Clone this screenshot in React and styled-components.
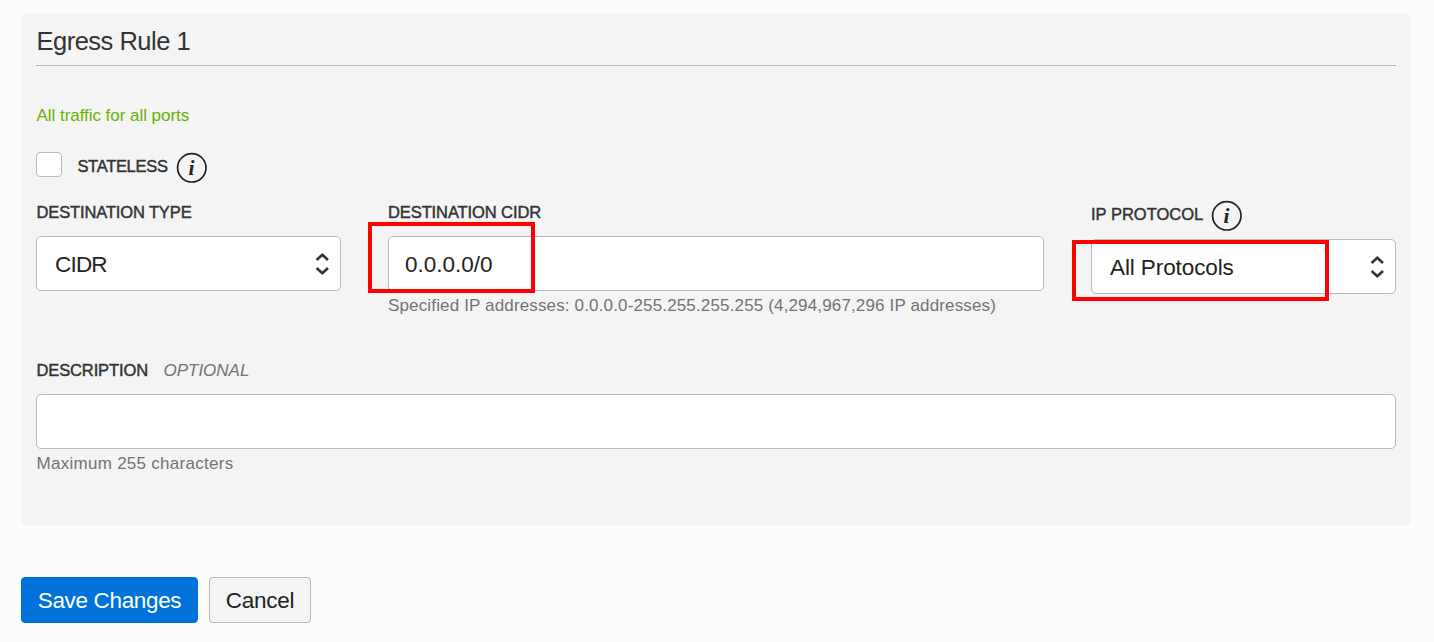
import React from "react";
import styled, { createGlobalStyle } from "styled-components";

const GlobalStyle = createGlobalStyle`
  * { box-sizing: border-box; }
  body {
    margin: 0;
    background: #fcfcfc;
    color: #333;
    font-family: "Liberation Sans", Arial, sans-serif;
  }
`;

const Page = styled.main`
  padding: 13px 23px 0 21px;
  height: 642px;
  overflow: hidden;
`;

const Panel = styled.section`
  height: 513px;
  padding: 0 15px;
  border-radius: 5px;
  background: #f4f4f4;
`;

const Title = styled.h2`
  margin: 0;
  height: 53px;
  padding: 8px 0 0 0.5px;
  border-bottom: 1px solid #b5b8bd;
  font-size: 25.5px;
  font-weight: 400;
  line-height: 41px;
  letter-spacing: -0.5px;
`;

const Summary = styled.p`
  margin: 40px 0 26px;
  padding-left: 0.5px;
  color: #66b300;
  font-size: 17px;
  line-height: 20px;
  letter-spacing: -0.04px;
`;

const StatelessRow = styled.div`
  display: flex;
  align-items: flex-start;
  height: 48px;
`;

const Checkbox = styled.span`
  width: 26px;
  height: 25px;
  margin-right: 15px;
  border: 1px solid #b3b9c6;
  border-radius: 4px;
  background: #fff;
`;

const Label = styled.label`
  display: block;
  font-size: 16.5px;
  line-height: 20px;
  white-space: nowrap;
  letter-spacing: ${(p) => p.$tracking || 0}px;
  -webkit-text-stroke: 0.45px currentColor;
  padding-top: ${(p) => p.$top || 0}px;
  padding-left: ${(p) => p.$inset || 0}px;
`;

const LabelRow = styled.div`
  display: flex;
  align-items: flex-start;
  height: ${(p) => p.$height}px;
`;

const InfoSvg = styled.svg`
  width: 32px;
  height: 32px;
  flex: none;
  margin-left: ${(p) => p.$gap}px;
`;

const InfoGlyph = styled.text`
  font: italic 700 21.5px "Liberation Serif", "Times New Roman", serif;
  fill: #222;
`;

const Fields = styled.div`
  display: grid;
  grid-template-columns: 305px 656px 305px;
  column-gap: 47px;
  height: 160px;
`;

const Field = styled.div`
  position: relative;
`;

const Control = styled.div`
  display: flex;
  align-items: center;
  justify-content: space-between;
  height: 55px;
  padding: 0 11px 0 ${(p) => p.$inset || 18}px;
  border: 1px solid #b3b9c6;
  border-radius: 5px;
  background: #fff;
  color: #222;
  font-size: 22.5px;
  letter-spacing: ${(p) => p.$tracking || 0}px;
`;

const Value = styled.span`
  padding-top: 3px;
`;

const Help = styled.p`
  margin: 5px 0 0;
  padding-left: ${(p) => p.$inset || 0}px;
  color: #727272;
  font-size: 17px;
  line-height: 20px;
  white-space: nowrap;
  letter-spacing: ${(p) => p.$tracking}px;
`;

const Optional = styled.em`
  margin: 1px 0 0 15.5px;
  color: #727272;
  font-size: 17px;
  line-height: 20px;
`;

const Highlight = styled.div`
  position: absolute;
  left: ${(p) => p.$left}px;
  top: ${(p) => p.$top}px;
  width: ${(p) => p.$width}px;
  height: ${(p) => p.$height}px;
  border: 4px solid #ff0000;
  pointer-events: none;
`;

const Actions = styled.div`
  display: flex;
  gap: 11px;
  margin-top: 51px;
`;

const Button = styled.button`
  width: ${(p) => p.$width}px;
  height: 46px;
  padding: 1px 0 0;
  border: 1px solid ${(p) => (p.$primary ? "#0073db" : "#b3b9c6")};
  border-radius: 4px;
  background: ${(p) => (p.$primary ? "#0073db" : "#f4f4f4")};
  color: ${(p) => (p.$primary ? "#fff" : "#222")};
  font-family: inherit;
  font-size: 22.5px;
  letter-spacing: ${(p) => p.$tracking || 0}px;
`;

const InfoIcon = ({ gap }) => (
  <InfoSvg $gap={gap} viewBox="0 0 32 32" fill="none">
    <circle cx="15.8" cy="15.8" r="14.2" stroke="#222" strokeWidth="1.7" />
    <InfoGlyph x="15.6" y="22.6" textAnchor="middle">i</InfoGlyph>
  </InfoSvg>
);

const Sorter = () => (
  <svg width="14" height="24" viewBox="0 0 14 24" fill="none">
    <path d="M1.6 8 L7.3 2.7 L13 8 M1.6 16 L7.3 21.3 L13 16" stroke="#333" strokeWidth="2.6" />
  </svg>
);

export default function App() {
  return (
    <>
      <GlobalStyle />
      <Page>
        <Panel>
          <Title>Egress Rule 1</Title>
          <Summary>All traffic for all ports</Summary>
          <StatelessRow>
            <Checkbox role="checkbox" aria-checked="false" />
            <Label $top={4} $inset={0.4} $tracking={-0.3}>STATELESS</Label>
            <InfoIcon gap={8.6} />
          </StatelessRow>
          <Fields>
            <Field>
              <LabelRow $height={36}>
                <Label $top={2} $inset={0.5} $tracking={-0.13}>DESTINATION TYPE</Label>
              </LabelRow>
              <Control $tracking={-0.8}>
                <Value>CIDR</Value>
                <Sorter />
              </Control>
            </Field>
            <Field>
              <LabelRow $height={36}>
                <Label $top={2} $tracking={-0.1}>DESTINATION CIDR</Label>
              </LabelRow>
              <Control $inset={16}>
                <Value>0.0.0.0/0</Value>
              </Control>
              <Help $tracking={0.15}>
                Specified IP addresses: 0.0.0.0-255.255.255.255 (4,294,967,296 IP addresses)
              </Help>
              <Highlight $left={-20} $top={22} $width={167} $height={71} />
            </Field>
            <Field>
              <LabelRow $height={39}>
                <Label $top={4}>IP PROTOCOL</Label>
                <InfoIcon gap={8} />
              </LabelRow>
              <Control $tracking={-0.1}>
                <Value>All Protocols</Value>
                <Sorter />
              </Control>
              <Highlight $left={-19} $top={40} $width={257} $height={61} />
            </Field>
          </Fields>
          <LabelRow $height={34}>
            <Label $inset={0.5} $tracking={-0.12}>DESCRIPTION</Label>
            <Optional>OPTIONAL</Optional>
          </LabelRow>
          <Control />
          <Help $inset={0.5} $tracking={0.28}>Maximum 255 characters</Help>
        </Panel>
        <Actions>
          <Button $primary $width={177} $tracking={-0.35}>Save Changes</Button>
          <Button $width={102} $tracking={-0.25}>Cancel</Button>
        </Actions>
      </Page>
    </>
  );
}
